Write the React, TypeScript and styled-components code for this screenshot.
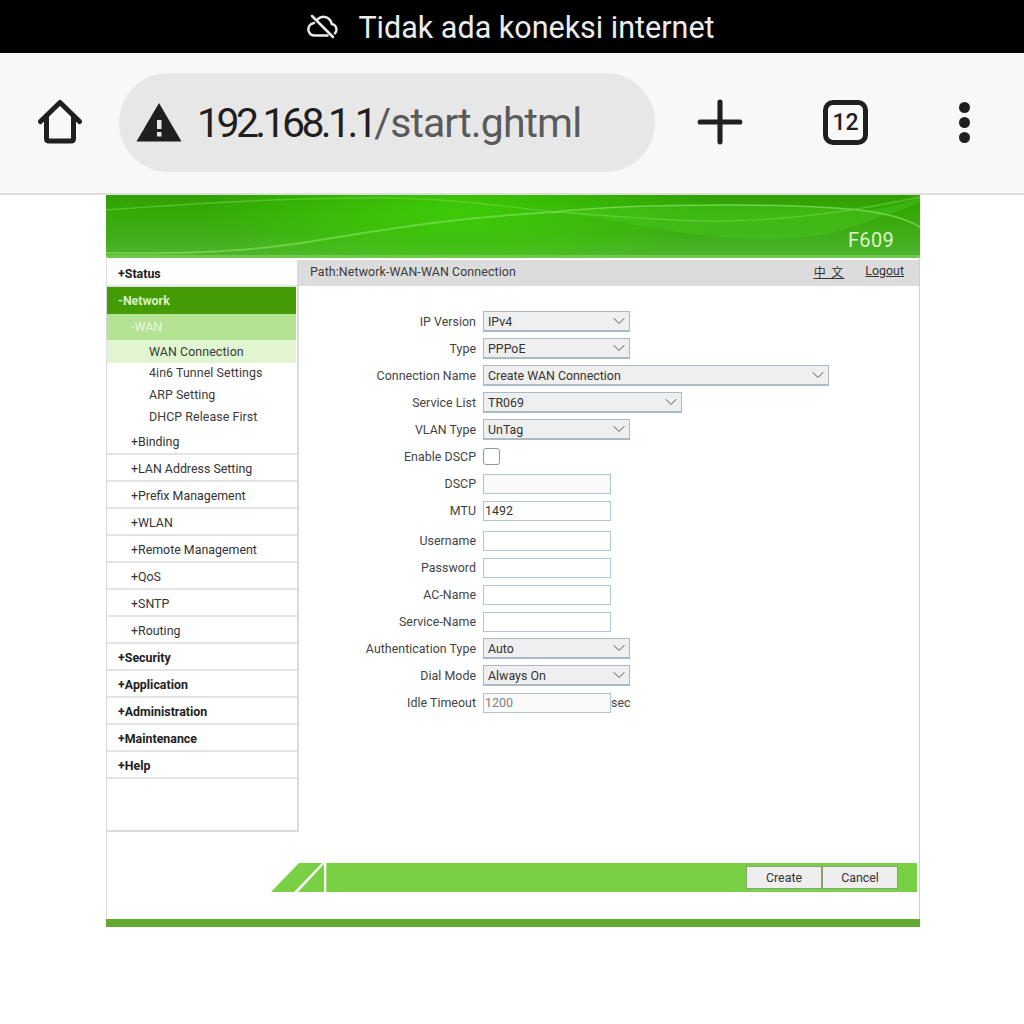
import { ReactNode } from "react";
import styled, { createGlobalStyle } from "styled-components";
import { ChevronDown, Plus } from "lucide-react";

const GlobalStyle = createGlobalStyle`
  html, body {
    margin: 0;
    padding: 0;
    background: #fff;
    font-family: Roboto, "Liberation Sans", sans-serif;
    overflow: hidden;
  }
  * { box-sizing: border-box; }
`;

const Screen = styled.div`
  width: 1024px;
  height: 1024px;
  background: #fff;
`;

const StatusBar = styled.div`
  height: 53px;
  background: #000;
  color: #ececec;
  display: flex;
  align-items: center;
  justify-content: center;
  gap: 20px;
  font-size: 30.5px;
  padding: 1px 3px 0 0;
`;

const Toolbar = styled.div`
  height: 142px;
  background: #f8f8f8;
  border-bottom: 2px solid #dedede;
  display: flex;
  align-items: center;
  padding: 0 0 2px 37px;
`;

const IconSlot = styled.div<{ $width: number; $gap?: number }>`
  width: ${(p) => p.$width}px;
  margin-right: ${(p) => p.$gap ?? 0}px;
  display: flex;
  justify-content: center;
  align-items: center;
  flex: none;
  color: #1f1f1f;
`;

const UrlPill = styled.div`
  width: 536px;
  height: 99px;
  border-radius: 50px;
  background: #e7e7e7;
  display: flex;
  align-items: center;
  padding-left: 17px;
  gap: 15px;
  margin-right: 31px;
  font-size: 41px;
  color: #5a5a5a;
`;

const UrlText = styled.span`
  padding-top: 2px;
  letter-spacing: -0.9px;
`;

const Host = styled.span`
  color: #1f1f1f;
  letter-spacing: -3.6px;
`;

const TabCount = styled.div`
  width: 45px;
  height: 45px;
  border: 5px solid #1f1f1f;
  border-radius: 10px;
  display: flex;
  align-items: center;
  justify-content: center;
  font-size: 23px;
  font-weight: 500;
  color: #1f1f1f;
`;

const Dots = styled.div`
  display: flex;
  flex-direction: column;
  gap: 4px;
`;

const Dot = styled.span`
  width: 11px;
  height: 11px;
  border-radius: 50%;
  background: #1f1f1f;
`;

const Frame = styled.div`
  width: 814px;
  height: 732px;
  margin-left: 106px;
  border-right: 1px solid #cfcfcf;
  border-left: 1px solid #dcdcdc;
  display: flex;
  flex-direction: column;
  font-size: 12.4px;
  color: #333;
`;

const Banner = styled.div`
  height: 63px;
  margin: 0 -1px;
  position: relative;
  border-radius: 0 0 3px 3px;
  overflow: hidden;
  background: linear-gradient(180deg, #2fa005 0%, #37aa08 30%, #3fad18 65%, #50b632 100%);
`;

const BannerArt = styled.svg`
  position: absolute;
  inset: 0;
  width: 100%;
  height: 100%;
`;

const Model = styled.span`
  position: absolute;
  right: 26px;
  bottom: 6px;
  color: #dff3cf;
  font-size: 20px;
  letter-spacing: 0.3px;
`;

const Main = styled.div`
  display: flex;
  height: 574px;
  padding-top: 2px;
`;

const Sidebar = styled.nav`
  width: 192px;
  flex: none;
  border-right: 2px solid #dcdcdc;
  border-bottom: 2px solid #dcdcdc;
  display: flex;
  flex-direction: column;
`;

const NavRow = styled.div<{ $h?: number }>`
  height: ${(p) => p.$h ?? 27}px;
  flex: none;
  display: flex;
  align-items: center;
`;

const TopItem = styled(NavRow)`
  padding: 2px 0 0 11px;
  font-weight: 700;
  font-size: 12.4px;
  color: #222;
  border-bottom: 2px solid #e4e4e4;
`;

const ActiveTop = styled(NavRow)`
  padding-left: 11px;
  background: #439c05;
  color: #d9f2c6;
  font-weight: 700;
  font-size: 12.4px;
  margin-right: 1px;
`;

const SubItem = styled(NavRow)`
  padding: 2px 0 0 24px;
  color: #333;
  border-bottom: 2px solid #e4e4e4;
`;

const ActiveSub = styled(NavRow)`
  padding: 0 0 2px 24px;
  background: #b3e393;
  color: #eaf7df;
  margin-right: 1px;
`;

const LeafItem = styled(NavRow)<{ $active?: boolean }>`
  padding: 0 0 ${(p) => (p.$active ? 0 : 2)}px 42px;
  color: #3a3a3a;
  letter-spacing: 0.08px;
  margin-right: 1px;
  background: ${(p) => (p.$active ? "#e0f5d0" : "transparent")};
`;

const Content = styled.div`
  flex: 1;
  min-width: 0;
`;

const PathBar = styled.div`
  height: 26px;
  background: #dcdcdc;
  display: flex;
  align-items: center;
  justify-content: space-between;
  padding: 0 15px 4px 11px;
  color: #3a3a3a;
  letter-spacing: 0.1px;
`;

const PathLinks = styled.div`
  display: flex;
  gap: 21px;
`;

const PathLink = styled.span`
  text-decoration: underline;
  color: #333;
  letter-spacing: 0;
`;

const CjkLink = styled(PathLink)`
  font-family: "Noto Sans CJK SC", sans-serif;
  font-size: 12px;
  word-spacing: 1px;
  letter-spacing: 1px;
`;

const Form = styled.div`
  display: flex;
  flex-direction: column;
  padding-top: 22px;
`;

const FormRow = styled.div<{ $top?: number }>`
  height: 27px;
  margin-top: ${(p) => p.$top ?? 0}px;
  display: flex;
  align-items: center;
`;

const Label = styled.label`
  width: 177px;
  flex: none;
  text-align: right;
  margin-right: 7px;
  padding-bottom: 1px;
  color: #444;
  letter-spacing: 0.03px;
`;

const SelectBox = styled.div<{ $width: number }>`
  width: ${(p) => p.$width}px;
  height: 21px;
  border: 1px solid #a9b9c6;
  border-bottom-width: 2px;
  background: #efefef;
  display: flex;
  align-items: center;
  justify-content: space-between;
  padding: 0 0 0 4px;
  color: #333;
`;

const TextBox = styled.input`
  width: 128px;
  height: 20px;
  border: 1px solid #aec4d4;
  background: #fff;
  padding: 0 0 1px 1px;
  font: inherit;
  color: #333;
  outline: none;
  &:disabled { background: #fafafa; color: #808080; }
`;

const CheckBox = styled.span`
  width: 17px;
  height: 17px;
  border: 1px solid #8f9aa0;
  border-radius: 3px;
  background: #fff;
`;

const Unit = styled.span`
  color: #444;
  padding-bottom: 1px;
`;

const ActionBar = styled.div`
  height: 29px;
  margin: 31px 2px 0 163px;
  display: flex;
`;

const BarSlant = styled.svg`
  width: 56px;
  height: 29px;
  flex: none;
`;

const BarBody = styled.div`
  flex: 1;
  background: #7ad045;
  display: flex;
  justify-content: flex-end;
  padding: 3px 19px 0 0;
  border-left: 1px solid #a0e070;
`;

const ActionButton = styled.div`
  width: 76px;
  height: 23px;
  background: #eeeeee;
  border: 1px solid #8aa27a;
  display: flex;
  align-items: center;
  justify-content: center;
  color: #333;
`;

const BottomStrip = styled.div`
  height: 8px;
  margin: 27px -1px 0;
  background: #65a935;
`;

function HomeIcon() {
  return (
    <svg width="46" height="46" viewBox="0 0 46 46" fill="none" stroke="#1f1f1f" strokeWidth="5" strokeLinecap="round" strokeLinejoin="round">
      <path d="M3.5 22.5L23 3.5l19.5 19" />
      <path d="M9.5 17v22.5c0 1.500 1 2.500 2.500 2.500h22c1.500 0 2.500-1 2.500-2.500V17" />
    </svg>
  );
}

function WarningIcon() {
  return (
    <svg width="46" height="39" viewBox="0 0 46 39">
      <path d="M23 0L45.500 38.500H.5z" fill="#1f1f1f" />
      <rect x="21" y="17" width="4.500" height="9" fill="#e7e7e7" />
      <rect x="21" y="29" width="4.500" height="4.500" fill="#e7e7e7" />
    </svg>
  );
}

function CloudSlashIcon() {
  return (
    <svg width="32" height="26" viewBox="0 0 32 26" fill="none" stroke="#ececec" strokeWidth="2.500" strokeLinecap="round" strokeLinejoin="round">
      <path d="M6 2l21 21" />
      <path d="M8 9C3.500 10 2 13.500 2.500 16.500 3.200 20 6 21.500 9 21.500h12.500" />
      <path d="M12 5c3-3 9-3 12 1 1 1.300 1.500 2.500 1.800 4 3.500.7 5 3.500 4.500 6.500-.2 1-.7 2-1.300 2.700" />
    </svg>
  );
}

function BannerWaves() {
  return (
    <BannerArt viewBox="0 0 814 63" preserveAspectRatio="none">
      <defs>
        <radialGradient id="glow" cx="350" cy="18" r="260" gradientUnits="userSpaceOnUse" gradientTransform="translate(0 12) scale(1 0.3)">
          <stop offset="0" stopColor="#3fd006" stopOpacity="0.85" />
          <stop offset="1" stopColor="#3fd006" stopOpacity="0" />
        </radialGradient>
      </defs>
      <rect width="814" height="63" fill="url(#glow)" />
      {/* ribbon right of the crossing */}
      <path d="M449 17C510 12 570 10 620 10c60 0 110 3 140 6 20-3 40-8 54-14v5c-18 8-36 14-54 20-30 12-60 17-100 17-80 0-150-20-211-27z" fill="#46c81e" opacity="0.45" />
      <path d="M0 15C90 8 190 2 285 3c60 1 110 8 164 14" fill="none" stroke="#72dc4a" strokeWidth="1.500" opacity="0.5" />
      <path d="M449 17c50-6 110-7 171-7 60 0 110 2 140 6 24 3 42 9 54 16" fill="none" stroke="#86e462" strokeWidth="1.600" opacity="0.7" />
      <path d="M449 17c50 3 110 10 171 9 60-1 120-8 194-24" fill="none" stroke="#72dc4a" strokeWidth="1.300" opacity="0.55" />
      <path d="M0 58c60 1 130 0 195-10 60-9 140-25 254-31" fill="none" stroke="#7fe05a" strokeWidth="2" opacity="0.65" />
      <rect y="60" width="814" height="3" fill="#7cd05a" opacity="0.7" />
    </BannerArt>
  );
}

function Select({ value, width }: { value: string; width: number }): ReactNode {
  return (
    <SelectBox $width={width}>
      {value}
      <ChevronDown size={20} color="#555" strokeWidth={1.200} />
    </SelectBox>
  );
}

const subItems = ["+Binding", "+LAN Address Setting", "+Prefix Management", "+WLAN", "+Remote Management", "+QoS", "+SNTP", "+Routing"];
const topItems = ["+Security", "+Application", "+Administration", "+Maintenance", "+Help"];

export default function App() {
  return (
    <Screen>
      <GlobalStyle />
      <StatusBar>
        <CloudSlashIcon />
        Tidak ada koneksi internet
      </StatusBar>
      <Toolbar>
        <IconSlot $width={46} $gap={36}>
          <HomeIcon />
        </IconSlot>
        <UrlPill>
          <WarningIcon />
          <UrlText>
            <Host>192.168.1.1</Host>/start.ghtml
          </UrlText>
        </UrlPill>
        <IconSlot $width={68} $gap={69}>
          <Plus size={68} strokeWidth={1.800} />
        </IconSlot>
        <IconSlot $width={45} $gap={91}>
          <TabCount>12</TabCount>
        </IconSlot>
        <IconSlot $width={11}>
          <Dots>
            <Dot />
            <Dot />
            <Dot />
          </Dots>
        </IconSlot>
      </Toolbar>
      <Frame>
        <Banner>
          <BannerWaves />
          <Model>F609</Model>
        </Banner>
        <Main>
          <Sidebar>
            <TopItem>+Status</TopItem>
            <ActiveTop>-Network</ActiveTop>
            <ActiveSub $h={26}>-WAN</ActiveSub>
            <LeafItem $h={23} $active>WAN Connection</LeafItem>
            <LeafItem $h={21}>4in6 Tunnel Settings</LeafItem>
            <LeafItem $h={22}>ARP Setting</LeafItem>
            <LeafItem $h={22}>DHCP Release First</LeafItem>
            {subItems.map((item) => (
              <SubItem key={item}>{item}</SubItem>
            ))}
            {topItems.map((item) => (
              <TopItem key={item}>{item}</TopItem>
            ))}
          </Sidebar>
          <Content>
            <PathBar>
              <span>Path:Network-WAN-WAN Connection</span>
              <PathLinks>
                <CjkLink>中 文</CjkLink>
                <PathLink>Logout</PathLink>
              </PathLinks>
            </PathBar>
            <Form>
              <FormRow>
                <Label>IP Version</Label>
                <Select value="IPv4" width={147} />
              </FormRow>
              <FormRow>
                <Label>Type</Label>
                <Select value="PPPoE" width={147} />
              </FormRow>
              <FormRow>
                <Label>Connection Name</Label>
                <Select value="Create WAN Connection" width={346} />
              </FormRow>
              <FormRow>
                <Label>Service List</Label>
                <Select value="TR069" width={199} />
              </FormRow>
              <FormRow>
                <Label>VLAN Type</Label>
                <Select value="UnTag" width={147} />
              </FormRow>
              <FormRow>
                <Label>Enable DSCP</Label>
                <CheckBox />
              </FormRow>
              <FormRow>
                <Label>DSCP</Label>
                <TextBox disabled />
              </FormRow>
              <FormRow>
                <Label>MTU</Label>
                <TextBox defaultValue="1492" />
              </FormRow>
              <FormRow $top={3}>
                <Label>Username</Label>
                <TextBox />
              </FormRow>
              <FormRow>
                <Label>Password</Label>
                <TextBox />
              </FormRow>
              <FormRow>
                <Label>AC-Name</Label>
                <TextBox />
              </FormRow>
              <FormRow>
                <Label>Service-Name</Label>
                <TextBox />
              </FormRow>
              <FormRow>
                <Label>Authentication Type</Label>
                <Select value="Auto" width={147} />
              </FormRow>
              <FormRow>
                <Label>Dial Mode</Label>
                <Select value="Always On" width={147} />
              </FormRow>
              <FormRow>
                <Label>Idle Timeout</Label>
                <TextBox disabled defaultValue="1200" />
                <Unit>sec</Unit>
              </FormRow>
            </Form>
          </Content>
        </Main>
        <ActionBar>
          <BarSlant viewBox="0 0 56 29">
            <path d="M1 29L29 0h23L24 29zM28 29L54 1v28z" fill="#7ad045" />
          </BarSlant>
          <BarBody>
            <ActionButton>Create</ActionButton>
            <ActionButton>Cancel</ActionButton>
          </BarBody>
        </ActionBar>
        <BottomStrip />
      </Frame>
    </Screen>
  );
}
